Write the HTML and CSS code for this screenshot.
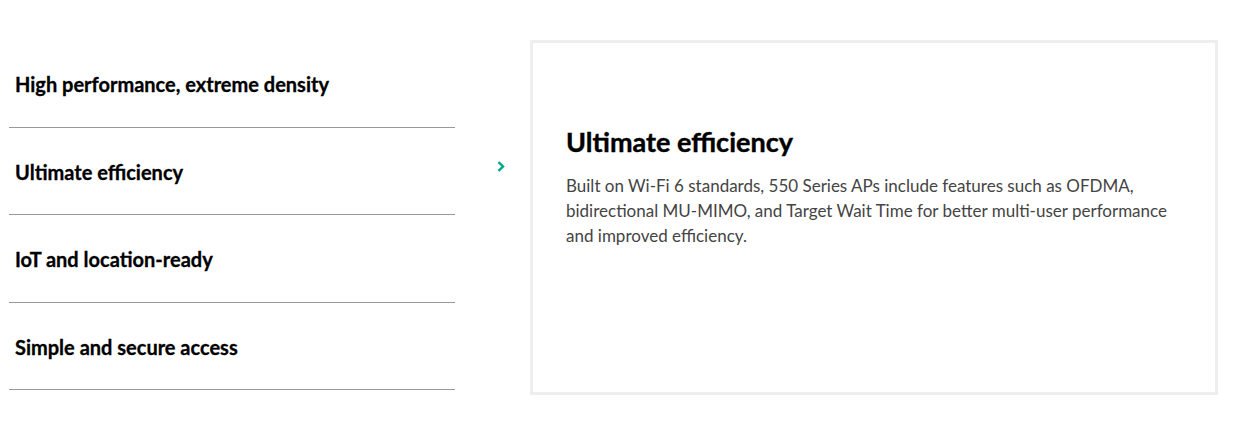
FILE: index.html
```html
<!DOCTYPE html>
<html lang="en">
<head>
    <meta charset="UTF-8">
    <title>550 Series features</title>
    <link rel="stylesheet" href="styles.css">
</head>
<body>
    <div class="features">
        <ul class="feature-list">
            <li class="feature-item">High performance, extreme density</li>
            <li class="feature-item ativo">Ultimate efficiency</li>
            <li class="feature-item">IoT and location-ready</li>
            <li class="feature-item">Simple and secure access</li>
        </ul>

        <div class="arrow-col">
            <svg class="arrow" width="8" height="11" viewBox="0 0 8 11">
                <path d="M1.5 1.2 L6 5.5 L1.5 9.8" fill="none" stroke="#01a982" stroke-width="2.4" stroke-linejoin="miter"/>
            </svg>
        </div>

        <div class="feature-card">
            <h2>Ultimate efficiency</h2>
            <p>Built on Wi-Fi 6 standards, 550 Series APs include features such as OFDMA, bidirectional MU-MIMO, and Target Wait Time for better multi-user performance and improved efficiency.</p>
        </div>
    </div>
</body>
</html>
```

FILE: styles.css
```css
body {
    font-family: "Lato", "Liberation Sans", sans-serif;
    margin: 0;
    background-color: #ffffff;
    color: #000000;
}

.features {
    display: flex;
    align-items: flex-start;
    padding: 40px 0 0 9px;
}

.feature-list {
    list-style: none;
    margin: 0;
    padding: 0;
    width: 446px;
}

.feature-item {
    height: 87.5px;
    box-sizing: border-box;
    border-bottom: 1px solid #999999;
    display: flex;
    align-items: center;
    padding: 2px 6px 0 6px;
    font-size: 20px;
    font-weight: 700;
    -webkit-text-stroke: 0.3px #000000;
}

.arrow-col {
    width: 75px;
    box-sizing: border-box;
    padding: 121px 0 0 42px;
}

.arrow {
    display: block;
}

.feature-card {
    width: 688px;
    height: 355px;
    box-sizing: border-box;
    border: 3px solid #eeeeee;
    padding: 81px 33px 0 33px;
}

.feature-card h2 {
    margin: 0 0 14px 0;
    font-size: 27px;
    font-weight: 700;
    line-height: 35px;
    -webkit-text-stroke: 0.4px #000000;
}

.feature-card p {
    margin: 0;
    font-size: 17px;
    line-height: 25px;
    color: #444444;
}
```
